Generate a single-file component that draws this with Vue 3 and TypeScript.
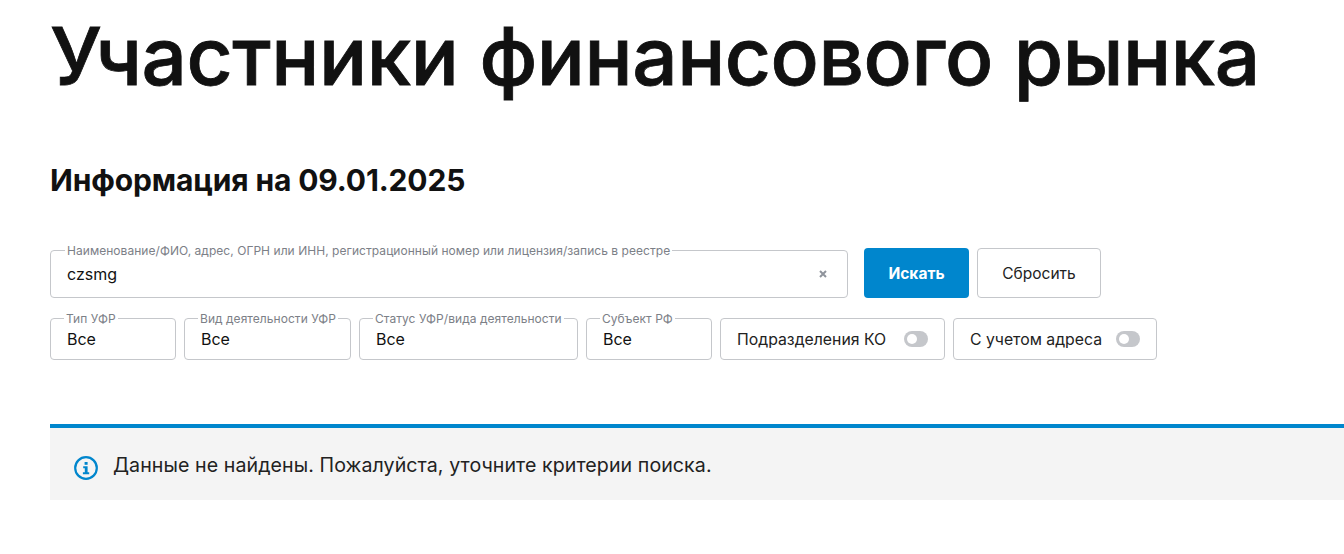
<script setup lang="ts">
const filters: { label: string; width: number }[] = [
  { label: 'Тип УФР', width: 126 },
  { label: 'Вид деятельности УФР', width: 167 },
  { label: 'Статус УФР/вида деятельности', width: 219 },
  { label: 'Субъект РФ', width: 126 },
]
const toggles: { label: string; width: number }[] = [
  { label: 'Подразделения КО', width: 225 },
  { label: 'С учетом адреса', width: 204 },
]
</script>

<template>
  <main class="page">
    <h1 class="title">Участники финансового рынка</h1>
    <h2 class="subtitle">Информация на 09.01.2025</h2>

    <div class="row search-row">
      <div class="field search-field">
        <span class="legend">Наименование/ФИО, адрес, ОГРН или ИНН, регистрационный номер или лицензия/запись в реестре</span>
        <span class="value">czsmg</span>
        <svg class="clear" width="8" height="8" viewBox="0 0 8 8" aria-hidden="true">
          <path d="M1 1l6 6M7 1L1 7" stroke="#8f949c" stroke-width="2" fill="none" />
        </svg>
      </div>
      <button class="btn primary">Искать</button>
      <button class="btn ghost">Сбросить</button>
    </div>

    <div class="row filter-row">
      <div v-for="f in filters" :key="f.label" class="field filter" :style="{ width: f.width + 'px' }">
        <span class="legend">{{ f.label }}</span>
        <span class="value">Все</span>
      </div>
      <div v-for="t in toggles" :key="t.label" class="toggle-box" :style="{ width: t.width + 'px' }">
        <span>{{ t.label }}</span>
        <span class="switch"><span class="knob"></span></span>
      </div>
    </div>

    <div class="alert">
      <svg class="info" width="24" height="24" viewBox="0 0 24 24" aria-hidden="true">
        <circle cx="12" cy="12" r="10.8" fill="none" stroke="#0086cd" stroke-width="2.2" />
        <rect x="10.6" y="6" width="3" height="2.8" fill="#0086cd" />
        <path d="M9.2 10.3h4.4v6h1.6v2H8.9v-2h1.9v-4H9.2z" fill="#0086cd" />
      </svg>
      <span class="alert-text">Данные не найдены. Пожалуйста, уточните критерии поиска.</span>
    </div>
  </main>
</template>

<style>
html, body { margin: 0; background: #fff; }
</style>

<style scoped>
.page {
  height: 554px;
  box-sizing: border-box;
  padding: 0 0 0 50px;
  overflow: hidden;
  font-family: Inter, "Noto Sans", sans-serif;
  color: #1a1a1a;
}
.title {
  margin: 0;
  padding-top: 8px;
  font-size: 80px;
  line-height: 96px;
  font-weight: 500;
  letter-spacing: -0.42px;
  -webkit-text-stroke: 0.8px #111;
  white-space: nowrap;
  color: #111;
}
.subtitle {
  margin: 56px 0 0;
  font-size: 30px;
  line-height: 40px;
  font-weight: 700;
  letter-spacing: -0.14px;
  color: #111;
}
.row { display: flex; }
.search-row { margin-top: 48px; gap: 8px; align-items: flex-end; height: 50px; }
.filter-row { margin-top: 20px; gap: 8px; }
.field {
  position: relative;
  box-sizing: border-box;
  border: 1px solid #c5c7cb;
  border-radius: 4px;
  background: #fff;
  display: flex;
  align-items: center;
  padding: 0 16px;
}
.search-field { width: 798px; height: 48px; margin-right: 8px; }
.filter { height: 42px; }
.legend {
  position: absolute;
  top: -6px;
  left: 14px;
  padding: 0 2px;
  background: #fff;
  font-size: 12px;
  line-height: 12px;
  letter-spacing: 0.045px;
  white-space: nowrap;
  color: #7c8087;
}
.filter .legend { left: 13px; }
.value { font-size: 16px; color: #111; }
.clear { margin-left: auto; margin-right: 4px; }
.btn {
  box-sizing: border-box;
  height: 50px;
  border-radius: 4px;
  font: inherit;
  font-size: 15.5px;
  padding: 0;
}
.primary {
  width: 105px;
  border: 0;
  background: #0086cd;
  color: #fff;
  font-weight: 700;
}
.ghost {
  width: 124px;
  border: 1px solid #c5c7cb;
  background: #fff;
  color: #222;
}
.toggle-box {
  box-sizing: border-box;
  height: 42px;
  border: 1px solid #c5c7cb;
  border-radius: 4px;
  display: flex;
  align-items: center;
  justify-content: space-between;
  padding: 0 16px;
  font-size: 15.8px;
  color: #222;
}
.switch {
  width: 24px;
  height: 16px;
  border-radius: 8px;
  background: #c5c7cb;
  display: flex;
  align-items: center;
  padding-left: 3px;
  box-sizing: border-box;
}
.knob { width: 10px; height: 10px; border-radius: 50%; background: #fff; }
.alert {
  margin-top: 64px;
  box-sizing: border-box;
  height: 76px;
  border-top: 4px solid #0086cd;
  background: #f4f4f4;
  display: flex;
  align-items: center;
  gap: 15px;
  padding-left: 24px;
  font-size: 19.6px;
  color: #222;
}
.info { margin-top: 8px; }
.alert-text { padding-top: 2px; letter-spacing: 0.07px; }
</style>
